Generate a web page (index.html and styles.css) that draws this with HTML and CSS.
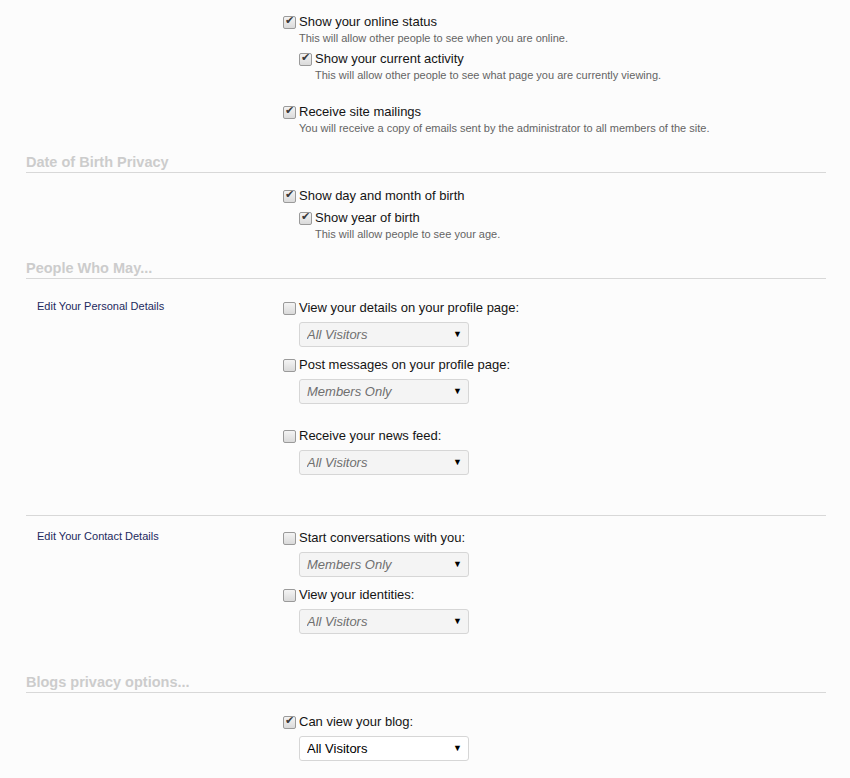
FILE: index.html
```html
<!DOCTYPE html>
<html lang="en">
<head>
  <meta charset="UTF-8" />
  <title>Privacy Settings</title>
  <link rel="stylesheet" href="styles.css">
</head>
<body>

  <div class="privacy-form">

    <div class="block first">
      <div class="field-row">
        <div class="row-label"></div>
        <div class="row-controls">
          <div class="option">
            <label><input type="checkbox" checked /> Show your online status</label>
            <p class="hint">This will allow other people to see when you are online.</p>
            <div class="option nested">
              <label><input type="checkbox" checked /> Show your current activity</label>
              <p class="hint">This will allow other people to see what page you are currently viewing.</p>
            </div>
          </div>
          <div class="option spaced">
            <label><input type="checkbox" checked /> Receive site mailings</label>
            <p class="hint">You will receive a copy of emails sent by the administrator to all members of the site.</p>
          </div>
        </div>
      </div>
    </div>

    <h3 class="section-title">Date of Birth Privacy</h3>
    <div class="block">
      <div class="field-row">
        <div class="row-label"></div>
        <div class="row-controls">
          <div class="option">
            <label><input type="checkbox" checked /> Show day and month of birth</label>
            <div class="option nested">
              <label><input type="checkbox" checked /> Show year of birth</label>
              <p class="hint">This will allow people to see your age.</p>
            </div>
          </div>
        </div>
      </div>
    </div>

    <h3 class="section-title">People Who May...</h3>
    <div class="block people">
      <div class="field-row group">
        <div class="row-label">Edit Your Personal Details</div>
        <div class="row-controls">
          <div class="option">
            <label><input type="checkbox" /> View your details on your profile page:</label>
            <div class="select-wrap"><select disabled><option>All Visitors</option></select></div>
          </div>
          <div class="option">
            <label><input type="checkbox" /> Post messages on your profile page:</label>
            <div class="select-wrap"><select disabled><option>Members Only</option></select></div>
          </div>
          <div class="option far">
            <label><input type="checkbox" /> Receive your news feed:</label>
            <div class="select-wrap"><select disabled><option>All Visitors</option></select></div>
          </div>
        </div>
      </div>

      <div class="field-row group second">
        <div class="row-label">Edit Your Contact Details</div>
        <div class="row-controls">
          <div class="option">
            <label><input type="checkbox" /> Start conversations with you:</label>
            <div class="select-wrap"><select disabled><option>Members Only</option></select></div>
          </div>
          <div class="option">
            <label><input type="checkbox" /> View your identities:</label>
            <div class="select-wrap"><select disabled><option>All Visitors</option></select></div>
          </div>
        </div>
      </div>
    </div>

    <h3 class="section-title">Blogs privacy options...</h3>
    <div class="block blogs">
      <div class="field-row">
        <div class="row-label"></div>
        <div class="row-controls">
          <div class="option">
            <label><input type="checkbox" checked /> Can view your blog:</label>
            <div class="select-wrap">
              <select>
                <option>All Visitors</option>
                <option>Members Only</option>
                <option>Followed Members Only</option>
              </select>
            </div>
          </div>
        </div>
      </div>
    </div>

  </div>

</body>
</html>
```

FILE: styles.css
```css
body {
  margin: 0;
  background-color: #fcfcfc;
  font-family: "Liberation Sans", Arial, sans-serif;
  color: #141414;
}

.privacy-form {
  width: 800px;
  margin-left: 26px;
  padding-top: 13px;
}

.field-row {
  display: grid;
  grid-template-columns: 257px 1fr;
}

.row-label {
  padding-left: 11px;
  font-size: 11px;
  line-height: 14px;
  color: #1d2a5e;
}

.option label {
  display: flex;
  align-items: center;
  gap: 3px;
  font-size: 13px;
  line-height: 18px;
}

.option.nested {
  margin-left: 16px;
  margin-top: 4px;
}

.option.spaced {
  margin-top: 20px;
}

.hint {
  margin: 0 0 0 16px;
  font-size: 11px;
  line-height: 15px;
  color: #646464;
}

/* checkboxes drawn by hand so they look the same everywhere */
input[type="checkbox"] {
  appearance: none;
  -webkit-appearance: none;
  position: relative;
  width: 13px;
  height: 13px;
  margin: 0;
  border: 1px solid #9a9a9a;
  border-radius: 2px;
  background: linear-gradient(#f4f4f4, #dadada);
  flex-shrink: 0;
}

input[type="checkbox"]:checked::after {
  content: "\2714";
  position: absolute;
  left: 1px;
  top: -3px;
  font-family: "DejaVu Sans", sans-serif;
  font-size: 11px;
  color: #3a3a3a;
}

.section-title {
  margin: 16px 0 0;
  font-size: 14.5px;
  line-height: 20px;
  color: #cccccc;
  border-bottom: 1px solid #d8d8d8;
}

.block {
  padding-top: 14px;
}

.block.first {
  padding-top: 0;
}

.block.people {
  margin-bottom: 38px;
}

.block.blogs {
  padding-top: 20px;
}

.group {
  padding-top: 6px;
}

.group .option + .option {
  margin-top: 9px;
}

.group .option.far {
  margin-top: 23px;
}

.group.second {
  margin-top: 40px;
  padding-top: 13px;
  border-top: 1px solid #d8d8d8;
}

.select-wrap {
  position: relative;
  width: 170px;
  margin: 5px 0 0 16px;
}

.select-wrap::after {
  content: "\25BC";
  position: absolute;
  right: 7px;
  top: 7px;
  font-size: 9px;
  color: #000;
  pointer-events: none;
}

select {
  appearance: none;
  -webkit-appearance: none;
  width: 100%;
  height: 25px;
  padding: 0 7px;
  font-family: "Liberation Sans", Arial, sans-serif;
  font-size: 13px;
  color: #000;
  background-color: #fff;
  border: 1px solid #d6d6d6;
  border-radius: 3px;
}

select:disabled {
  background-color: #f4f4f4;
  color: #6f6f6f;
  font-style: italic;
  opacity: 1;
}
```
